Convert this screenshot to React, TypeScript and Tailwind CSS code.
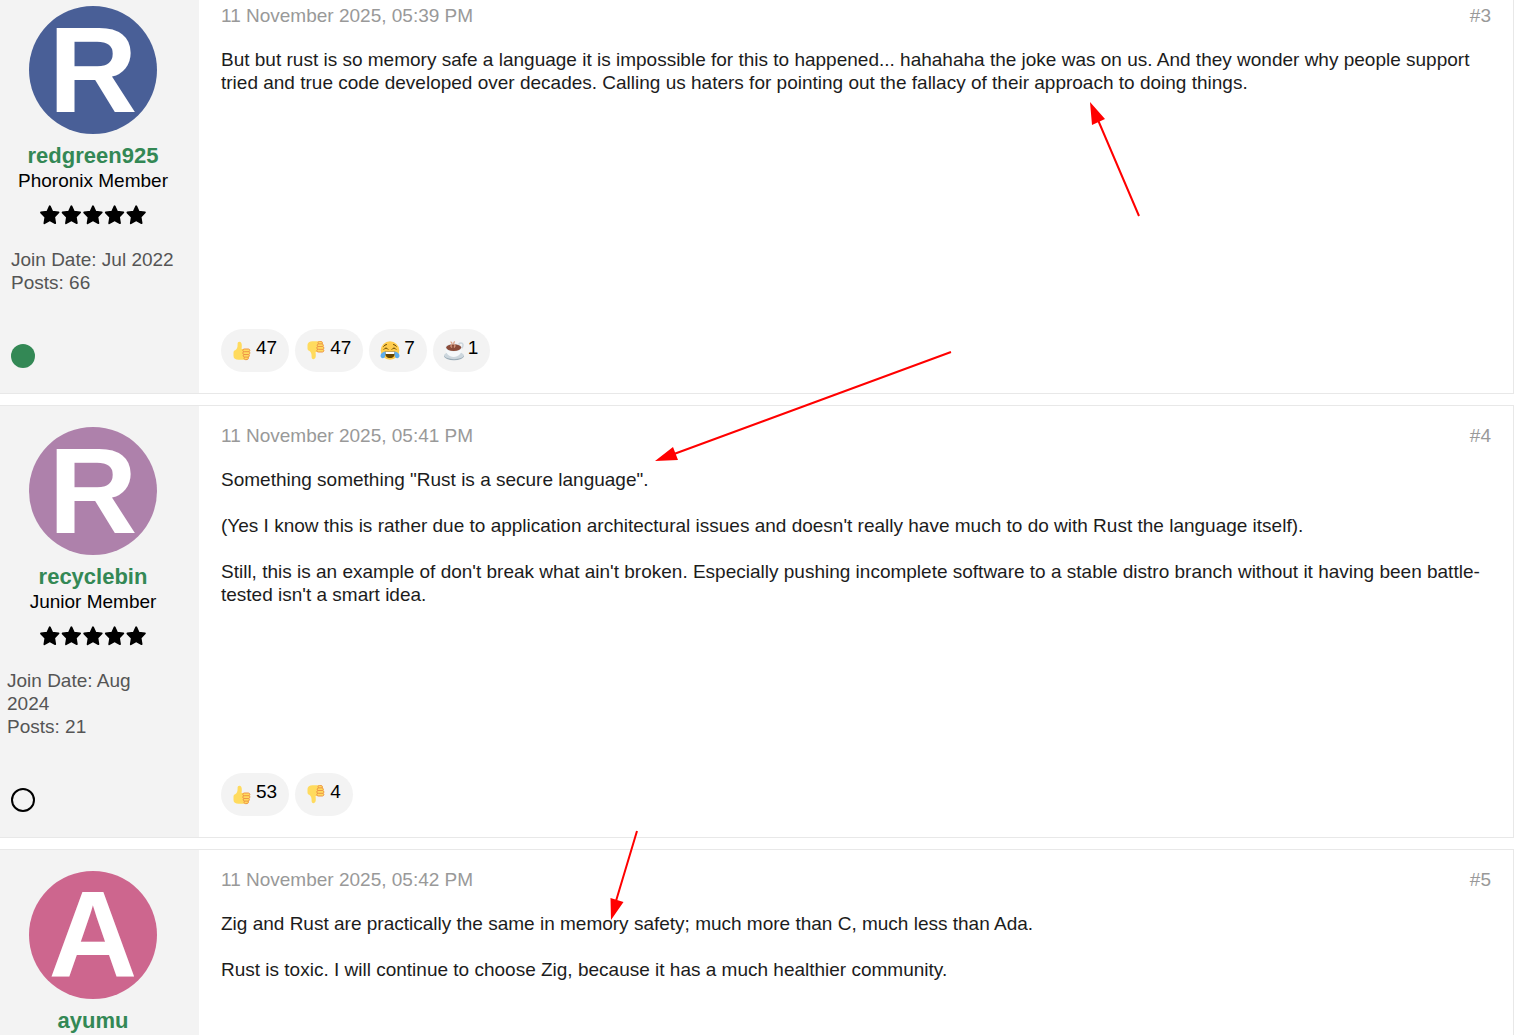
import React from 'react';

type ReactionKind = 'up' | 'down' | 'joy' | 'coffee';

interface MemberDetails {
  role: string;
  joined: string;
  posts: number;
  online: boolean;
  className: string;
}

interface Post {
  id: number;
  date: string;
  initial: string;
  avatarColor: string;
  username: string;
  details?: MemberDetails;
  paragraphs: string[];
  reactions: { kind: ReactionKind; count: number }[];
}

const posts: Post[] = [
  {
    id: 3,
    date: '11 November 2025, 05:39 PM',
    initial: 'R',
    avatarColor: 'bg-[#495f97]',
    username: 'redgreen925',
    details: {
      role: 'Phoronix Member',
      joined: 'Jul 2022',
      posts: 66,
      online: true,
      className: 'pl-[11px]',
    },
    paragraphs: [
      'But but rust is so memory safe a language it is impossible for this to happened... hahahaha the joke was on us. And they wonder why people support tried and true code developed over decades. Calling us haters for pointing out the fallacy of their approach to doing things.',
    ],
    reactions: [
      { kind: 'up', count: 47 },
      { kind: 'down', count: 47 },
      { kind: 'joy', count: 7 },
      { kind: 'coffee', count: 1 },
    ],
  },
  {
    id: 4,
    date: '11 November 2025, 05:41 PM',
    initial: 'R',
    avatarColor: 'bg-[#ae81ab]',
    username: 'recyclebin',
    details: {
      role: 'Junior Member',
      joined: 'Aug 2024',
      posts: 21,
      online: false,
      className: 'pl-[7px] pr-8',
    },
    paragraphs: [
      'Something something "Rust is a secure language".',
      "(Yes I know this is rather due to application architectural issues and doesn't really have much to do with Rust the language itself).",
      "Still, this is an example of don't break what ain't broken. Especially pushing incomplete software to a stable distro branch without it having been battle-tested isn't a smart idea.",
    ],
    reactions: [
      { kind: 'up', count: 53 },
      { kind: 'down', count: 4 },
    ],
  },
  {
    id: 5,
    date: '11 November 2025, 05:42 PM',
    initial: 'A',
    avatarColor: 'bg-[#cd668e]',
    username: 'ayumu',
    paragraphs: [
      'Zig and Rust are practically the same in memory safety; much more than C, much less than Ada.',
      'Rust is toxic. I will continue to choose Zig, because it has a much healthier community.',
    ],
    reactions: [],
  },
];

const Thumb = ({ down = false }: { down?: boolean }) => (
  <g transform={down ? 'matrix(1 0 0 -1 0 19)' : undefined}>
    <path
      d="M1.500 11.500c0-1.200.7-1.900 1.700-2.300C5 8.400 5.700 6 5.600 3.200 5.500 1.600 6.300.8 7.400.8c1.800 0 2.500 1.900 2.400 4.200L9.600 8h6.600c1.600 0 2.300 1.500 1.400 2.600.8.900.7 2.100-.2 2.800.6 1 .3 2.100-.7 2.700.4 1.600-.4 2.700-1.900 2.700H6.500C3.500 18.800 1.500 17.500 1.500 15z"
      fill="#ffdb5e"
    />
    <path
      d="M16.500 8h-4.300c-1.900 0-1.900 2.700 0 2.700h4.800M12 10.700c-1.700.2-1.700 2.500 0 2.800h4.700M12.200 13.500c-1.500.3-1.300 2.400.2 2.600h3.700M12.800 16.100c-1.300.3-1 2.400.5 2.500h1.800M16.500 8c1.600.2 1.800 2.100.6 2.700 1.100.6.900 2.500-.4 2.800 1 .6.700 2.300-.6 2.600.6 1.100.1 2.300-1 2.500"
      fill="none"
      stroke="#ee9547"
      strokeWidth="1"
    />
  </g>
);

const Joy = () => (
  <>
    <circle cx="10" cy="9.500" r="9.300" fill="#ffcc4d" />
    <path d="M4.800 10.500h10.400c0 4.300-2.100 6.600-5.200 6.600s-5.200-2.300-5.200-6.600z" fill="#664500" />
    <path d="M5.200 10.800h9.600l-.5 2.100H5.700z" fill="#fff" />
    <path
      d="M4 8.300Q6 5.500 8 8.300M12 8.300Q14 5.500 16 8.300M3.600 5.400Q4.800 3.700 6.500 3.500M16.400 5.400Q15.200 3.700 13.500 3.500"
      fill="none"
      stroke="#664500"
      strokeWidth="1"
      strokeLinecap="round"
    />
    <path
      d="M5.500 10.500C2.500 10.800.6 12.800.5 14.800c0 3 4 3.300 4.700.5.400-1.600.2-3.200.3-4.800zM14.500 10.500c3 .3 4.900 2.300 5 4.300 0 3-4 3.300-4.700.5-.4-1.600-.2-3.200-.3-4.800z"
      fill="#5dadec"
    />
  </>
);

const Coffee = () => (
  <>
    <ellipse cx="10" cy="15.200" rx="9.800" ry="4" fill="#99aab5" />
    <ellipse cx="10" cy="14.400" rx="9.800" ry="3.800" fill="#ccd6dd" />
    <path d="M14.500 4.500c0-3 4.500-3.500 4.500-.5 0 2.500-2 4-4 4.500" fill="none" stroke="#ccd6dd" strokeWidth="1.500" />
    <path d="M1.500 6.500c0 6 3.300 9.500 8.200 9.500s8.200-3.500 8.200-9.500z" fill="#f5f8fa" />
    <ellipse cx="9.700" cy="6.500" rx="8.200" ry="3.900" fill="#e1e8ed" />
    <ellipse cx="9.700" cy="6.600" rx="7.500" ry="3.300" fill="#8a4b38" />
    <path
      d="M6.500.8q2.500 1.300 1 3t.7 2.600M10.800.5q-2 1.700-.5 3t-.3 3"
      fill="none"
      stroke="#d99e82"
      strokeWidth="1.200"
    />
  </>
);

const ReactionIcon = ({ kind }: { kind: ReactionKind }) => (
  <svg viewBox="0 0 20 20" className="h-5 w-5" aria-hidden="true">
    {kind === 'up' && <Thumb />}
    {kind === 'down' && <Thumb down />}
    {kind === 'joy' && <Joy />}
    {kind === 'coffee' && <Coffee />}
  </svg>
);

const Stars = () => (
  <svg viewBox="0 0 108 20" className="mt-[13px] h-5 w-[108px]" role="img" aria-label="5 stars">
    {[0, 1, 2, 3, 4].map((n) => (
      <path
        key={n}
        transform={`translate(${n * 21.6} 0)`}
        d="M10.800 1.200 13.300 6.600 19.500 7.500 15.200 12 16.200 18.200 10.800 15.300 5.400 18.200 6.400 12 2 7.500 8.300 6.600z"
        fill="#000"
        stroke="#000"
        strokeWidth="1.800"
        strokeLinejoin="round"
      />
    ))}
  </svg>
);

const UserInfo = ({ post }: { post: Post }) => {
  const { details } = post;

  return (
    <aside className="flex w-[199px] shrink-0 flex-col pb-[25px]">
      <div className="flex w-[186px] flex-col items-center">
        <div className={`flex h-32 w-32 items-center justify-center rounded-full text-[123px] leading-[128px] font-bold text-white ${post.avatarColor}`}>
          {post.initial}
        </div>
        <a href="#" className="mt-2 text-[22px] leading-[27px] font-bold text-[#338855]">
          {post.username}
        </a>
        {details && (
          <>
            <span className="text-black">{details.role}</span>
            <Stars />
          </>
        )}
      </div>
      {details && (
        <>
          <div className={`mt-[23px] text-[#555] ${details.className}`}>
            <div>{`Join Date: ${details.joined}`}</div>
            <div>{`Posts: ${details.posts}`}</div>
          </div>
          <span
            className={`mt-[50px] ml-[11px] h-6 w-6 rounded-full ${details.online ? 'bg-[#338855]' : 'border-2 border-black'}`}
            role="img"
            aria-label={details.online ? 'Online' : 'Offline'}
          />
        </>
      )}
    </aside>
  );
};

const PostCard = ({ post, first }: { post: Post; first: boolean }) => (
  <article className={`flex border-r border-b border-[#e8e8e8] ${first ? '' : 'border-t'}`}>
    <div className={`flex bg-[#f3f3f3] ${first ? 'pt-[6px]' : 'pt-[21px]'}`}>
      <UserInfo post={post} />
    </div>
    <div className={`flex min-w-0 flex-1 flex-col px-[22px] pb-[21px] ${first ? 'pt-1' : 'pt-[18px]'}`}>
      <header className="flex justify-between text-[#999]">
        <time>{post.date}</time>
        <a href="#">{`#${post.id}`}</a>
      </header>
      <div className="mt-[21px] flex flex-col gap-[23px] text-[#1c1c1c]">
        {post.paragraphs.map((text) => (
          <p key={text}>{text}</p>
        ))}
      </div>
      <div className="mt-auto flex gap-[6px]">
        {post.reactions.map((r) => (
          <button key={r.kind} type="button" className="flex h-[43px] items-center gap-1 rounded-full bg-[#f3f3f3] pr-3 pl-[11px] text-black">
            <ReactionIcon kind={r.kind} />
            <span className="pb-[6px]">{r.count}</span>
          </button>
        ))}
      </div>
    </div>
  </article>
);

// red annotation arrows drawn over the thread
const Arrows = () => (
  <svg className="pointer-events-none absolute top-0 left-0 h-[1035px] w-[1200px]" viewBox="0 0 1200 1035" aria-hidden="true">
    <g stroke="#f00" strokeWidth="2">
      <path d="M1139 216 1098 120M951 352 674 454M637 831 616 901" />
    </g>
    <g fill="#f00">
      <path d="M1090 102 1105 119 1092 125zM655 461 673 447 678 460zM611 920 610.500 898 623.500 902z" />
    </g>
  </svg>
);

export default function App() {
  return (
    <main className="relative h-screen overflow-hidden bg-white pr-[21px] font-['Liberation_Sans',Arial,sans-serif] text-[19px] leading-[23px]">
      <div className="flex min-h-full flex-col gap-[11px]">
        {posts.map((post, i) => (
          <PostCard key={post.id} post={post} first={i === 0} />
        ))}
      </div>
      <Arrows />
    </main>
  );
}
